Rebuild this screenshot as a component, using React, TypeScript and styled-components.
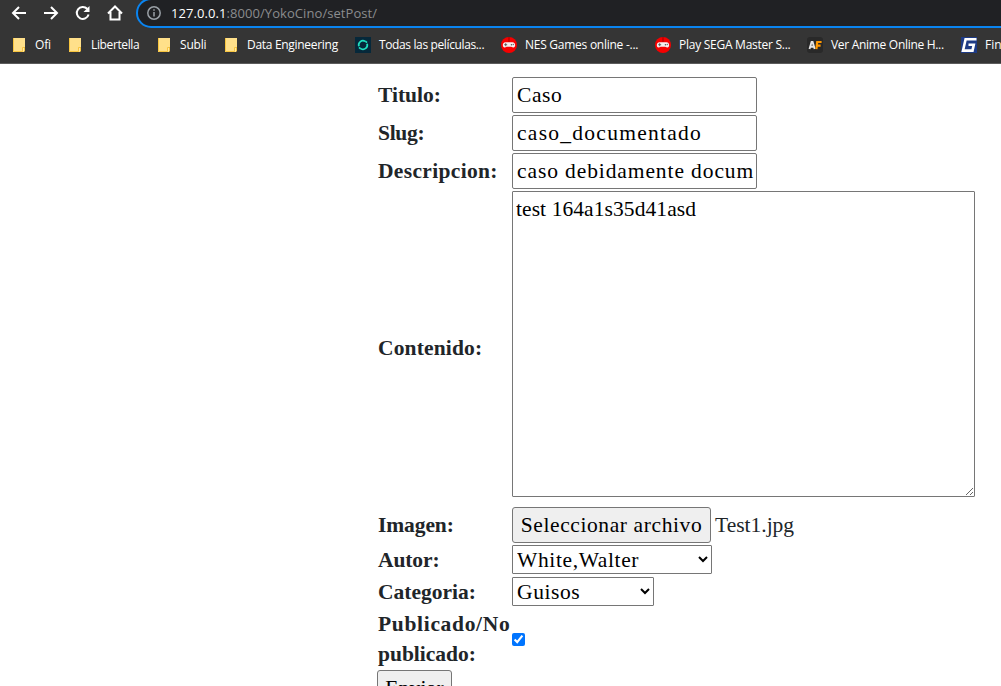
import React from "react";
import styled, { createGlobalStyle } from "styled-components";

const serif = '"Liberation Serif", "Times New Roman", serif';
const sans = '"Open Sans", "Noto Sans", sans-serif';

const GlobalStyle = createGlobalStyle`
  *, *::before, *::after { box-sizing: border-box; }
  html, body { margin: 0; height: 686px; overflow: hidden; background: #fff; }
`;

const Page = styled.div`
  width: 1001px;
  height: 686px;
  overflow: hidden;
  background: #fff;
  color: #212529;
  font: 21.5px/30px ${serif};
`;

const Chrome = styled.header`
  height: 64px;
  background: #353535;
  border-bottom: 1px solid #5c5c5c;
  font-family: ${sans};
  overflow: hidden;
`;

const Toolbar = styled.div`
  display: flex;
  height: 28px;
`;

const NavButtons = styled.nav`
  display: flex;
  gap: 16px;
  width: 136px;
  padding: 5px 0 0 11px;
  flex: none;
`;

const NavIcon = styled.svg`
  width: 16px;
  height: 16px;
  flex: none;
  fill: none;
  stroke: #fff;
  stroke-width: 2;
`;

const AddressBar = styled.div`
  display: flex;
  align-items: center;
  flex: 1;
  height: 30px;
  margin: -2px -30px 0 0;
  padding-left: 9px;
  gap: 10px;
  background: #202124;
  border: 2px solid #0a84f0;
  border-radius: 15px;
`;

const Url = styled.span`
  color: #8b8c8e;
  font-size: 13px;
  line-height: 18px;
  letter-spacing: 0.07px;
  white-space: pre;
  b { font-weight: 400; color: #fff; }
`;

const Bookmarks = styled.div`
  display: flex;
  align-items: center;
  height: 34px;
  padding-left: 11px;
`;

const Bookmark = styled.div<{ $pitch: number }>`
  display: flex;
  align-items: center;
  flex: none;
  width: ${(p) => p.$pitch}px;
  gap: 8px;
  svg { flex: none; }
`;

const BookmarkText = styled.span<{ $ls: number }>`
  color: #fff;
  font-size: 12px;
  line-height: 16px;
  letter-spacing: ${(p) => p.$ls}px;
  white-space: nowrap;
`;

const FormArea = styled.form`
  padding: 13px 0 0 377px;
`;

const Fields = styled.div`
  display: grid;
  grid-template-columns: 135px 463px;
  grid-template-rows: 36px 36px 36px 314px 36px 30px 30px 60px;
  row-gap: 2px;
`;

const Label = styled.label<{ $ls?: number }>`
  align-self: center;
  padding-left: 1px;
  font-weight: 700;
  letter-spacing: ${(p) => p.$ls ?? 0}px;
  white-space: pre;
`;

const PublishedLine = styled.span`
  letter-spacing: 0.68px;
`;

const TextInput = styled.input<{ $ls: number }>`
  width: 245px;
  height: 36px;
  padding: 1px 2px 1px 4px;
  border: 1px solid #767676;
  border-radius: 2px;
  background: #fff;
  color: #000;
  font: 21.5px/30px ${serif};
  letter-spacing: ${(p) => p.$ls}px;
  outline: none;
`;

const TextArea = styled.textarea`
  width: 463px;
  height: 306px;
  padding: 2px 2px 2px 3px;
  border: 1px solid #767676;
  border-radius: 1px;
  background: #fff;
  color: #000;
  font: 21.5px/30px ${serif};
  letter-spacing: 0.08px;
  outline: none;
  resize: both;
`;

const FileField = styled.div`
  display: flex;
  align-items: center;
  gap: 4px;
  white-space: nowrap;
`;

const Button = styled.button<{ $w: number; $ls: number }>`
  display: block;
  width: ${(p) => p.$w}px;
  height: 36px;
  padding: 0;
  border: 1px solid #767676;
  border-radius: 3px;
  background: #efefef;
  color: #000;
  font: 21.5px/30px ${serif};
  letter-spacing: ${(p) => p.$ls}px;
  text-align: center;
  white-space: nowrap;
`;

const Select = styled.select<{ $w: number; $ls: number }>`
  width: ${(p) => p.$w}px;
  height: 29px;
  padding: 0;
  border: 1px solid #767676;
  border-radius: 1px;
  background-color: #fff;
  color: #000;
  font: 21.5px ${serif};
  letter-spacing: ${(p) => p.$ls}px;
`;

const Checkbox = styled.input`
  align-self: center;
  width: 13px;
  height: 13px;
  margin: 0;
`;

const Submit = styled.div`
  padding-top: 1px;
`;

const Folder = () => (
  <svg width="16" height="16" viewBox="0 0 16 16">
    <path d="M2 1h12v9.500h-1v4.500H2z" fill="#ffe08a" />
    <path d="M2.500 1v13.500h9V10.500h2v4" fill="none" stroke="#f8c53f" />
    <path d="M12 11h1v3h-1z" fill="#ffe9a8" />
  </svg>
);

const Ring = () => (
  <svg width="16" height="16" viewBox="0 0 16 16">
    <rect width="16" height="16" fill="#06283a" />
    <g fill="none" stroke="#1fe0c0" strokeWidth="1.700">
      <path d="M3.900 9.200A4.200 4.200 0 0 1 10.200 4.400" />
      <path d="M12.100 6.800A4.200 4.200 0 0 1 5.800 11.600" />
      <path d="M10.300 4.200l1.700 1.500M5.700 11.800L4 10.300" />
    </g>
  </svg>
);

const Gamepad = () => (
  <svg width="16" height="16" viewBox="0 0 16 16">
    <circle cx="8" cy="8" r="8" fill="#f60000" />
    <path d="M8 0v5" stroke="#a30000" />
    <path d="M4.500 5.200h7c3.600 0 3.300 5.700.6 5.200L10.200 9.800H5.800l-1.900.6c-2.700.5-3-5.200.6-5.200z" fill="#f5eeee" />
    <path d="M3.200 7.700h3M4.700 6.200v3" stroke="#555" strokeWidth=".9" />
    <circle cx="10.500" cy="7.800" r=".8" fill="#555" />
    <circle cx="12.400" cy="7.500" r=".7" fill="#777" />
  </svg>
);

const AnimeLogo = () => (
  <svg width="16" height="16" viewBox="0 0 16 16">
    <rect width="16" height="16" rx="3" fill="#292929" />
    <path d="M2.500 12L4.600 5h1L7.700 12M3.500 9.800h3.300" fill="none" stroke="#e5e5e5" strokeWidth="1.900" />
    <path d="M9.400 12.200L10.200 5H14.600M9.800 8.600h3.800" fill="none" stroke="#ff9800" strokeWidth="2.200" />
  </svg>
);

const GLogo = () => (
  <svg width="16" height="16" viewBox="0 0 16 16">
    <rect width="16" height="16" fill="#1d3a85" />
    <path d="M15.500 2.200H4.600L2 13.600h9.500l1.300-5.800H7.500" fill="none" stroke="#fff" strokeWidth="2.600" />
  </svg>
);

const bookmarks = [
  { text: "Ofi", icon: <Folder />, pitch: 56, ls: -0.2 },
  { text: "Libertella", icon: <Folder />, pitch: 89, ls: -0.37 },
  { text: "Subli", icon: <Folder />, pitch: 67, ls: -0.2 },
  { text: "Data Engineering", icon: <Folder />, pitch: 132, ls: -0.3 },
  { text: "Todas las películas...", icon: <Ring />, pitch: 146, ls: -0.37 },
  { text: "NES Games online -...", icon: <Gamepad />, pitch: 154, ls: -0.26 },
  { text: "Play SEGA Master S...", icon: <Gamepad />, pitch: 152, ls: -0.26 },
  { text: "Ver Anime Online H...", icon: <AnimeLogo />, pitch: 154, ls: -0.3 },
  { text: "Fin", icon: <GLogo />, pitch: 60, ls: 0 },
];

export default function App() {
  return (
    <Page>
      <GlobalStyle />
      <Chrome>
        <Toolbar>
          <NavButtons>
            <NavIcon viewBox="0 0 16 16"><path d="M15 8H2.500M8 2L2 8l6 6" /></NavIcon>
            <NavIcon viewBox="0 0 16 16"><path d="M1 8h12.500M8 2l6 6-6 6" /></NavIcon>
            <NavIcon viewBox="0 0 16 16">
              <path d="M13.600 9.500A6 6 0 1 1 12.200 3.800" />
              <path d="M14.500 1v6h-6z" fill="#fff" stroke="none" />
            </NavIcon>
            <NavIcon viewBox="0 0 16 16"><path d="M1 8.500L8 1.500l7 7M3.500 7v7.500h9V7" /></NavIcon>
          </NavButtons>
          <AddressBar>
            <svg width="14" height="14" viewBox="0 0 14 14" fill="none" stroke="#9aa0a6" strokeWidth="1.500">
              <circle cx="7" cy="7" r="6.200" />
              <path d="M7 6v4.500M7 3.300v1.500" />
            </svg>
            <Url><b>127.0.0.1</b>:8000/YokoCino/setPost/</Url>
          </AddressBar>
        </Toolbar>
        <Bookmarks>
          {bookmarks.map((b) => (
            <Bookmark key={b.text} $pitch={b.pitch}>
              {b.icon}
              <BookmarkText $ls={b.ls}>{b.text}</BookmarkText>
            </Bookmark>
          ))}
        </Bookmarks>
      </Chrome>
      <FormArea>
        <Fields>
          <Label>Titulo:</Label>
          <TextInput $ls={0.6} defaultValue="Caso" />
          <Label $ls={-0.3}>Slug:</Label>
          <TextInput $ls={1.27} defaultValue="caso_documentado" />
          <Label $ls={0.33}>Descripcion:</Label>
          <TextInput $ls={0.9} defaultValue="caso debidamente docum" />
          <Label $ls={0.15}>Contenido:</Label>
          <TextArea defaultValue="test 164a1s35d41asd" spellCheck={false} />
          <Label $ls={-0.1}>Imagen:</Label>
          <FileField>
            <Button type="button" $w={199} $ls={0.6}>Seleccionar archivo</Button>
            <span>Test1.jpg</span>
          </FileField>
          <Label $ls={-0.1}>Autor:</Label>
          <Select $w={200} $ls={0.62}><option>White,Walter</option></Select>
          <Label $ls={0}>Categoria:</Label>
          <Select $w={142} $ls={0.6}><option>Guisos</option></Select>
          <Label><PublishedLine>Publicado/No</PublishedLine>{"\n"}publicado:</Label>
          <Checkbox type="checkbox" defaultChecked />
        </Fields>
        <Submit><Button type="button" $w={75} $ls={0.2}>Enviar</Button></Submit>
      </FormArea>
    </Page>
  );
}
